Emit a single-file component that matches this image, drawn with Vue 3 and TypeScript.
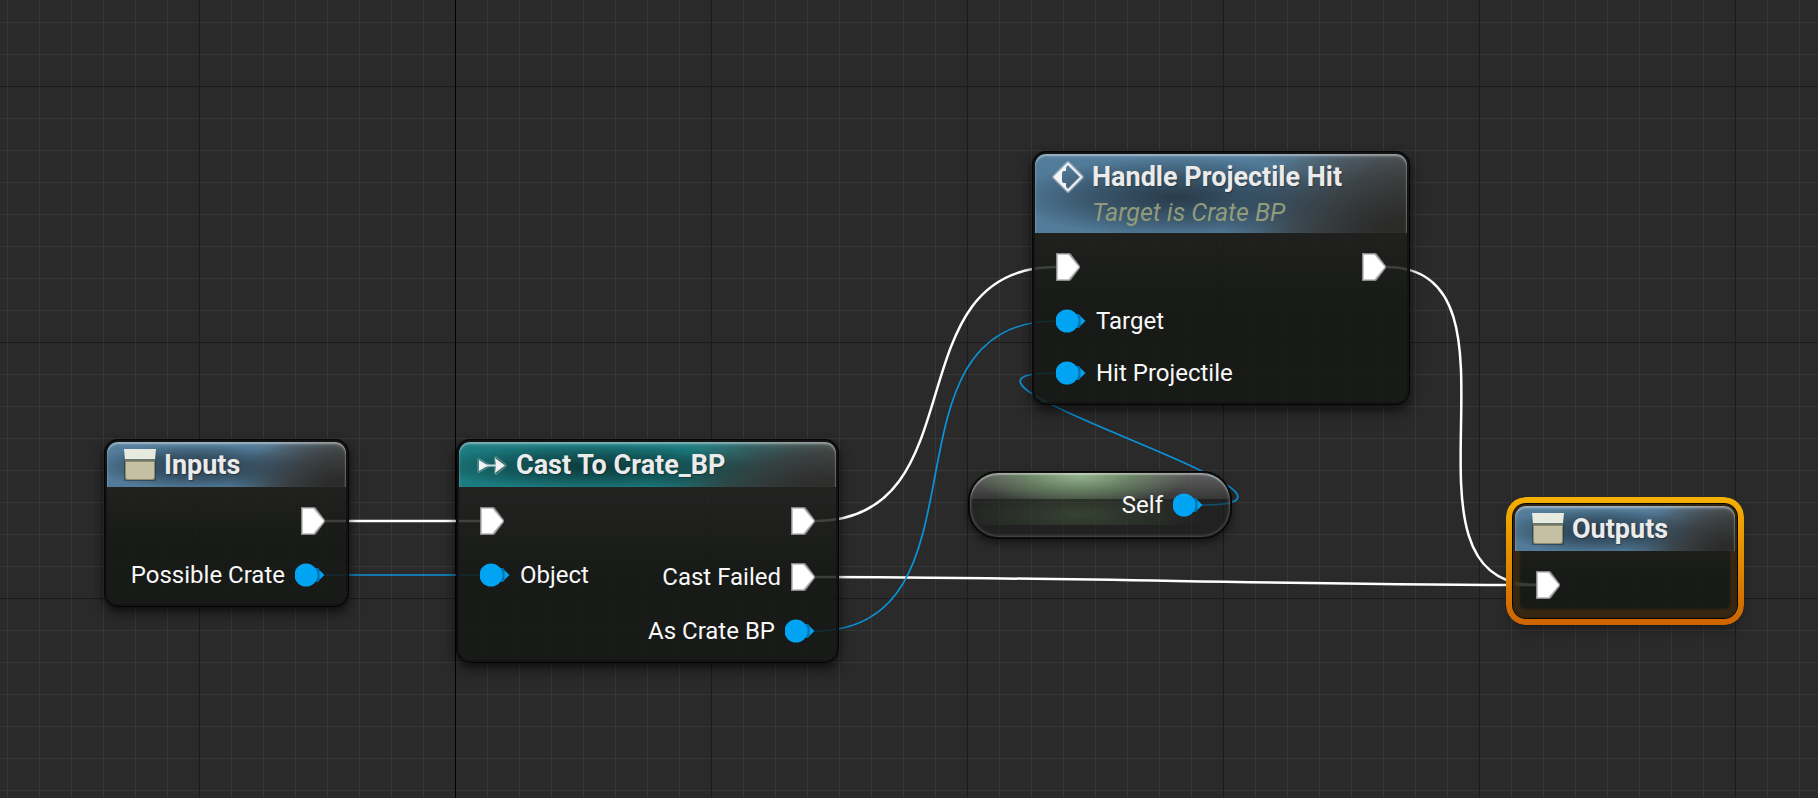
<script setup lang="ts">
type PinKind = 'exec' | 'object'
type IconKind = 'tunnel' | 'cast' | 'event'

interface Pin {
  kind: PinKind
  label?: string
}

interface GraphNode {
  id: string
  title?: string
  subtitle?: string
  icon?: IconKind
  tone: 'blue' | 'teal' | 'pure'
  selected?: boolean
  x: number
  y: number
  width: number
  inputs: Pin[]
  outputs: Pin[]
}

interface Wire {
  id: string
  kind: PinKind
  from: [number, number]
  to: [number, number]
}

const nodes: GraphNode[] = [
  {
    id: 'inputs',
    title: 'Inputs',
    icon: 'tunnel',
    tone: 'blue',
    x: 104,
    y: 439,
    width: 245,
    inputs: [],
    outputs: [{ kind: 'exec' }, { kind: 'object', label: 'Possible Crate' }],
  },
  {
    id: 'cast',
    title: 'Cast To Crate_BP',
    icon: 'cast',
    tone: 'teal',
    x: 456,
    y: 439,
    width: 383,
    inputs: [{ kind: 'exec' }, { kind: 'object', label: 'Object' }],
    outputs: [
      { kind: 'exec' },
      { kind: 'exec', label: 'Cast Failed' },
      { kind: 'object', label: 'As Crate BP' },
    ],
  },
  {
    id: 'handle-hit',
    title: 'Handle Projectile Hit',
    subtitle: 'Target is Crate BP',
    icon: 'event',
    tone: 'blue',
    x: 1032,
    y: 151,
    width: 378,
    inputs: [
      { kind: 'exec' },
      { kind: 'object', label: 'Target' },
      { kind: 'object', label: 'Hit Projectile' },
    ],
    outputs: [{ kind: 'exec' }],
  },
  {
    id: 'self',
    tone: 'pure',
    x: 968,
    y: 471,
    width: 264,
    inputs: [],
    outputs: [{ kind: 'object', label: 'Self' }],
  },
  {
    id: 'outputs',
    title: 'Outputs',
    icon: 'tunnel',
    tone: 'blue',
    selected: true,
    x: 1512,
    y: 503,
    width: 226,
    inputs: [{ kind: 'exec' }],
    outputs: [],
  },
]

const wires: Wire[] = [
  { id: 'in-cast', kind: 'exec', from: [325, 521], to: [480, 521] },
  { id: 'crate-object', kind: 'object', from: [325, 575], to: [480, 575] },
  { id: 'cast-hit', kind: 'exec', from: [815, 521], to: [1056, 267] },
  { id: 'failed-out', kind: 'exec', from: [815, 577], to: [1536, 585] },
  { id: 'crate-target', kind: 'object', from: [814, 631], to: [1056, 321] },
  { id: 'self-projectile', kind: 'object', from: [1202, 505], to: [1056, 373] },
  { id: 'hit-out', kind: 'exec', from: [1386, 267], to: [1536, 585] },
]

/* Tangents grow with distance; backward wires loop out of both pins. */
function wirePath({ from, to }: Wire): string {
  const dx = to[0] - from[0]
  const dy = Math.abs(to[1] - from[1])
  const tangent = dx >= 0 ? (dx + dy) / 3 : (-dx + dy) * 0.6
  return `M${from[0]} ${from[1]} C${from[0] + tangent} ${from[1]} ${to[0] - tangent} ${to[1]} ${to[0]} ${to[1]}`
}

function place(node: GraphNode) {
  return { left: `${node.x}px`, top: `${node.y}px`, width: `${node.width}px` }
}
</script>

<template>
  <main class="graph">
    <svg class="wires" aria-hidden="true">
      <path v-for="wire in wires" :key="wire.id" :class="['wire', wire.kind]" :d="wirePath(wire)" />
    </svg>

    <article
      v-for="node in nodes"
      :key="node.id"
      :class="['node', node.tone, { selected: node.selected }]"
      :style="place(node)"
    >
      <header v-if="node.title" class="head">
        <svg v-if="node.icon === 'tunnel'" class="icon" viewBox="0 0 32 32" aria-hidden="true">
          <path d="M0 12h32v19q0 1-1 1H1q-1 0-1-1z" fill="#131d22" opacity="0.4" />
          <path d="M1 11h30v18q0 2-2 2H3q-2 0-2-2z" fill="#8d886e" />
          <path d="M2 13h28v15q0 2-2 2H4q-2 0-2-2z" fill="#c5bfa3" />
          <path d="M0 0h32l-1 10H1z" fill="#e7eadf" />
          <path d="M1 10h30v2H1z" fill="#6f776a" />
        </svg>
        <svg v-else-if="node.icon === 'cast'" class="icon" viewBox="0 0 32 32" aria-hidden="true">
          <g stroke="#8fb5b3" stroke-opacity="0.4" stroke-width="4" stroke-linejoin="round">
            <path d="M3 11l9 5.500L3 22zM20 9l9 7.500-9 7.500z" />
          </g>
          <path d="M10 16.500h12" stroke="#c8dad8" stroke-width="2" />
          <path d="M3 11l9 5.500L3 22z" fill="#f2f2f2" />
          <path d="M19 9l10 7.500L19 24l1-7.500z" fill="#f2f2f2" />
        </svg>
        <svg v-else class="icon" viewBox="0 0 32 32" aria-hidden="true">
          <path
            d="M16 2L30 16 16 30 2 16z"
            fill="none"
            stroke="#c3ced6"
            stroke-opacity="0.5"
            stroke-width="4"
            stroke-linejoin="round"
          />
          <path
            d="M16 2.500L29.500 16 16 29.500 2.500 16z"
            fill="none"
            stroke="#eef1f3"
            stroke-width="2"
            stroke-linejoin="round"
          />
          <path d="M2.500 16L14 4.500V10h-2q-2 0-2 2v8q0 2 2 2h2v5.500z" fill="#f2f4f5" />
        </svg>
        <h2 class="title">{{ node.title }}</h2>
        <p v-if="node.subtitle" class="subtitle">{{ node.subtitle }}</p>
      </header>

      <div class="body">
        <ul v-for="side in (['inputs', 'outputs'] as const)" :key="side" :class="['pins', side]">
          <li v-for="(pin, index) in node[side]" :key="index" :class="['pin', pin.kind]">
            <svg v-if="pin.kind === 'exec'" class="exec-shape" viewBox="0 0 24 30" aria-hidden="true">
              <path d="M0 1h13q1 0 2 1l9 12v2l-9 12q-1 1-2 1H0z" fill="#8b8b8b" />
              <path d="M1 2h12l10 12v2L13 28H1z" fill="#fff" fill-opacity="0.5" />
              <path d="M2 3h10.500L22.500 15 12.500 27H2z" fill="#fff" />
            </svg>
            <svg v-else class="object-shape" viewBox="0 0 30 24" aria-hidden="true">
              <path d="M20 5h3l6 7-6 7h-3z" fill="#0072ab" />
              <path d="M24.500 7.500l5 4.500-5 4.500z" fill="#00a2f0" />
              <ellipse cx="11" cy="12" rx="11.500" ry="11.500" fill="#00a4f2" />
            </svg>
            <span v-if="pin.label" class="label">{{ pin.label }}</span>
          </li>
        </ul>
      </div>
    </article>
  </main>
</template>

<style>
html,
body {
  margin: 0;
  background: #2a2a2a;
}
</style>

<style scoped>
.graph {
  position: relative;
  min-height: 100vh;
  overflow: hidden;
  font-family: Roboto, 'Liberation Sans', sans-serif;
  color: #f8f8f8;
  background-color: #2a2a2a;
  background-image:
    linear-gradient(#000, #000),
    linear-gradient(to right, #1b1b1b 1px, transparent 1px),
    linear-gradient(to bottom, #1b1b1b 1px, transparent 1px),
    linear-gradient(to right, #373737 1px, transparent 1px),
    linear-gradient(to bottom, #373737 1px, transparent 1px);
  background-size:
    1px 100%,
    256px 256px,
    256px 256px,
    32px 32px,
    32px 32px;
  background-position:
    455px 0,
    199px 86px,
    199px 86px,
    7px 22px,
    7px 22px;
  background-repeat: no-repeat, repeat, repeat, repeat, repeat;
}

.wires {
  position: absolute;
  inset: 0;
  width: 100%;
  height: 100%;
}

.wire {
  fill: none;
}

.wire.exec {
  stroke: #fff;
  stroke-width: 2.5;
}

.wire.object {
  stroke: #0b93da;
  stroke-width: 1.7;
}

.node {
  position: absolute;
  box-sizing: border-box;
  border: 3px solid #121312;
  border-radius: 14px;
  outline: 1px solid #050505;
  outline-offset: -1px;
  background: linear-gradient(rgba(32, 33, 31, 0.84) 25%, rgba(20, 23, 19, 0.84) 60%);
  background-clip: padding-box;
  box-shadow:
    0 4px 8px rgba(0, 0, 0, 0.5),
    0 8px 16px rgba(0, 0, 0, 0.25);
}

.head {
  position: relative;
  z-index: 1;
  display: grid;
  grid-template-columns: 32px 1fr;
  column-gap: 8px;
  align-items: center;
  padding: 7px 16px 6px 17px;
  border-radius: 11px 11px 0 0;
  box-shadow:
    inset 0 2px 2px rgba(255, 255, 255, 0.4),
    inset 0 4px 4px rgba(255, 255, 255, 0.08),
    inset -1px 0 1px rgba(255, 255, 255, 0.12);
}

.blue .head {
  background:
    radial-gradient(ellipse 44% 50% at 38% 55%, rgba(36, 52, 65, 0.9), rgba(40, 58, 72, 0.55) 55%, transparent),
    radial-gradient(ellipse 50% 120% at 100% 100%, #2b2b2a 15%, rgba(44, 44, 43, 0.6) 60%, transparent),
    linear-gradient(to right, #517b99 60%, #565a5c 100%);
}

.teal .head {
  background:
    radial-gradient(ellipse 44% 50% at 36% 55%, rgba(12, 50, 52, 0.9), rgba(12, 58, 60, 0.55) 55%, transparent),
    radial-gradient(ellipse 50% 120% at 100% 100%, #2e2e2d 15%, rgba(44, 44, 43, 0.6) 60%, transparent),
    linear-gradient(to right, #1b7b7f 60%, #5a5f5e 100%);
}

.icon {
  width: 32px;
  height: 32px;
}

.title,
.subtitle {
  margin: 0;
  white-space: nowrap;
}

.title {
  font-size: 27px;
  line-height: 32px;
  font-weight: 700;
  color: #ebebeb;
  text-shadow: 1px 1px 1px rgba(0, 0, 0, 0.3);
}

.subtitle {
  grid-column: 2;
  margin-top: 4px;
  padding-top: 2px;
  font-size: 25px;
  line-height: 28px;
  font-style: italic;
  color: #919b7c;
}

.body {
  display: flex;
  justify-content: space-between;
  padding: 19px 21px 16px;
}

.pins {
  display: flex;
  flex-direction: column;
  gap: 26px;
  margin: 0;
  padding: 0;
  list-style: none;
}

.pin {
  display: flex;
  align-items: center;
  gap: 10px;
  height: 26px;
}

.pin.exec {
  height: 30px;
}

.outputs .pin {
  flex-direction: row-reverse;
}

.exec-shape {
  flex: none;
  width: 24px;
  height: 30px;
}

.object-shape {
  flex: none;
  width: 30px;
  height: 24px;
}

.label {
  font-size: 24px;
  line-height: 26px;
  white-space: nowrap;
}

.selected {
  box-shadow: 0 8px 14px rgba(0, 0, 0, 0.5);
}

.selected::before {
  content: '';
  position: absolute;
  inset: -9px;
  padding: 6px;
  border-radius: 20px;
  background: linear-gradient(#f5b100, #cc6300);
  mask:
    linear-gradient(#000 0 0) content-box exclude,
    linear-gradient(#000 0 0);
}

.selected::after {
  content: '';
  position: absolute;
  inset: -2px;
  border-radius: 12px;
  box-shadow: inset 0 -2px 2px 7px rgba(74, 48, 14, 0.6);
}

.pure {
  border: 2px solid #121212;
  border-radius: 30px;
  background:
    radial-gradient(ellipse 42% 140% at 42% 0, rgba(162, 200, 152, 0.85), rgba(122, 164, 114, 0.55) 50%, transparent)
      0 0 / 100% 26px no-repeat,
    linear-gradient(rgba(140, 140, 140, 0.6), rgba(80, 80, 80, 0.45)) 0 0 / 100% 26px no-repeat,
    radial-gradient(ellipse 48% 120% at 42% 60%, rgba(62, 80, 58, 0.7), transparent) 0 26px / 100% 26px no-repeat,
    rgba(28, 28, 28, 0.6);
  box-shadow:
    inset 0 2px 1px rgba(255, 255, 255, 0.3),
    inset 0 0 3px 1px rgba(200, 200, 200, 0.3),
    0 4px 8px rgba(0, 0, 0, 0.5);
}

.pure .body {
  justify-content: flex-end;
  padding: 19px 27px;
}
</style>
